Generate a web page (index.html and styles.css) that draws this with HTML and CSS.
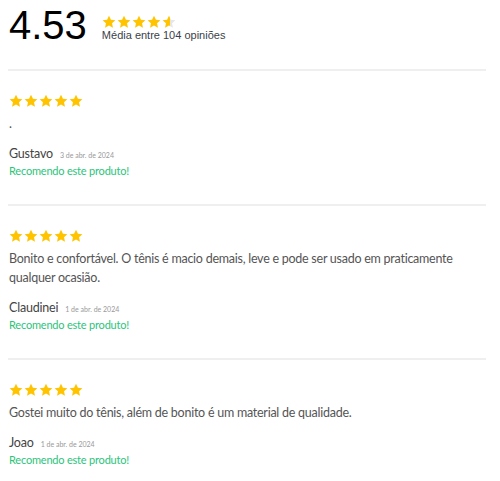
FILE: index.html
```html
<!DOCTYPE html>
<html lang="pt-BR">
<head>
<meta charset="utf-8">
<link rel="stylesheet" href="styles.css">
</head>
<body>
<svg width="0" height="0" class="defs">
  <defs>
    <symbol id="star" viewBox="0 0 24 24"><path d="M12 1.2l3.3 7.1 7.6.8-5.7 5.2 1.6 7.6L12 18l-6.8 3.9 1.6-7.6L1.1 9.1l7.6-.8z"/></symbol>
    <linearGradient id="half"><stop offset="55%" stop-color="#ffc300"/><stop offset="55%" stop-color="#e6e6e6"/></linearGradient>
  </defs>
</svg>
<div class="wrap">
  <div class="summary">
    <div class="score">4.53</div>
    <div class="summary-info">
      <div class="stars stars-sm">
        <svg><use href="#star"/></svg><svg><use href="#star"/></svg><svg><use href="#star"/></svg><svg><use href="#star"/></svg><svg class="half"><use href="#star"/></svg>
      </div>
      <div class="avg">Média entre 104 opiniões</div>
    </div>
  </div>

  <div class="review">
    <div class="stars"><svg><use href="#star"/></svg><svg><use href="#star"/></svg><svg><use href="#star"/></svg><svg><use href="#star"/></svg><svg><use href="#star"/></svg></div>
    <p class="text">.</p>
    <div class="author"><span class="name">Gustavo</span><span class="date">3 de abr. de 2024</span></div>
    <div class="rec">Recomendo este produto!</div>
  </div>

  <div class="review">
    <div class="stars"><svg><use href="#star"/></svg><svg><use href="#star"/></svg><svg><use href="#star"/></svg><svg><use href="#star"/></svg><svg><use href="#star"/></svg></div>
    <p class="text">Bonito e confortável. O tênis é macio demais, leve e pode ser usado em praticamente qualquer ocasião.</p>
    <div class="author"><span class="name">Claudinei</span><span class="date">1 de abr. de 2024</span></div>
    <div class="rec">Recomendo este produto!</div>
  </div>

  <div class="review">
    <div class="stars"><svg><use href="#star"/></svg><svg><use href="#star"/></svg><svg><use href="#star"/></svg><svg><use href="#star"/></svg><svg><use href="#star"/></svg></div>
    <p class="text">Gostei muito do tênis, além de bonito é um material de qualidade.</p>
    <div class="author"><span class="name">Joao</span><span class="date">1 de abr. de 2024</span></div>
    <div class="rec">Recomendo este produto!</div>
  </div>
</div>
</body>
</html>
```
FILE: styles.css
```css
html, body { margin: 0; padding: 0; background: #fff; }
.defs { position: absolute; }
.wrap {
  width: 478px;
  padding: 0 8px;
  font-family: Lato, "Liberation Sans", sans-serif;
  color: #555;
}
.summary {
  display: flex;
  align-items: flex-start;
  gap: 15px;
  padding-top: 5px;
  height: 64px;
  border-bottom: 2px solid #efefef;
}
.score {
  font-family: "Liberation Sans", Arial, sans-serif;
  font-size: 40px;
  line-height: 40px;
  color: #000;
  margin-left: 1px;
}
.summary-info { padding-top: 10px; }
.stars { display: flex; gap: 1px; fill: #ffc300; }
.stars svg { width: 14px; height: 14px; }
.stars-sm svg.half { fill: url(#half); }
.avg {
  font-family: "Liberation Sans", Arial, sans-serif;
  font-size: 11px;
  color: #3a3f4a;
  line-height: 13px;
}
.review {
  padding: 23px 0 26px 1px;
  border-bottom: 2px solid #efefef;
}
.review:last-child { border-bottom: none; }
.text {
  margin: 6px 0 0;
  font-size: 12.5px;
  letter-spacing: -0.25px;
  line-height: 19px;
  color: #555;
}
.author {
  display: flex;
  align-items: baseline;
  gap: 7px;
  margin-top: 13px;
}
.name { font-size: 12.5px; letter-spacing: -0.2px; color: #444; }
.date { font-size: 7px; color: #999; }
.rec {
  font-size: 11px;
  letter-spacing: -0.2px;
  color: #2bc47a;
  margin-top: 3px;
  line-height: 14px;
}
```
